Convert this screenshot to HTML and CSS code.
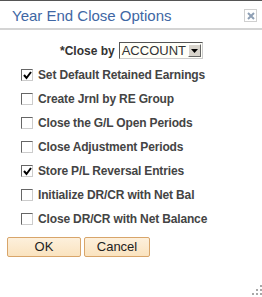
FILE: index.html
```html
<!DOCTYPE html>
<html>
<head>
<title>Year End Close Options</title>
<meta charset="utf-8">
<link rel="stylesheet" href="styles.css">
</head>
<body>
<div class="dialog">
	<div class="header">
		<div class="title">Year End Close Options</div>
		<div class="close">
			<svg width="8" height="8" viewBox="0 0 8 8"><path d="M1 1L7 7M7 1L1 7" stroke="#8fa0b5" stroke-width="2"/></svg>
		</div>
	</div>
	<div class="body">
		<div class="closeby">
			<span class="lbl">*Close by</span>
			<span class="select"><span class="value">ACCOUNT</span><span class="arrow"><svg width="7" height="4" viewBox="0 0 7 4"><path d="M0 0H7L3.5 4Z" fill="#000"/></svg></span></span>
		</div>
		<div class="opt"><span class="box"><svg width="9" height="9" viewBox="0 0 9 9"><path d="M1 4L3.5 7L8 1" stroke="#000" stroke-width="2" fill="none"/></svg></span>Set Default Retained Earnings</div>
		<div class="opt"><span class="box"></span>Create Jrnl by RE Group</div>
		<div class="opt"><span class="box"></span>Close the G/L Open Periods</div>
		<div class="opt"><span class="box"></span>Close Adjustment Periods</div>
		<div class="opt"><span class="box"><svg width="9" height="9" viewBox="0 0 9 9"><path d="M1 4L3.5 7L8 1" stroke="#000" stroke-width="2" fill="none"/></svg></span>Store P/L Reversal Entries</div>
		<div class="opt"><span class="box"></span>Initialize DR/CR with Net Bal</div>
		<div class="opt"><span class="box"></span>Close DR/CR with Net Balance</div>
		<div class="buttons">
			<span class="btn ok">OK</span>
			<span class="btn cancel">Cancel</span>
		</div>
	</div>
	<div class="grip">
		<svg width="10" height="10" viewBox="0 0 10 10" fill="#a8a8a8">
			<rect x="8" y="0" width="2" height="2"/>
			<rect x="4" y="4" width="2" height="2"/><rect x="8" y="4" width="2" height="2"/>
			<rect x="0" y="8" width="2" height="2"/><rect x="4" y="8" width="2" height="2"/><rect x="8" y="8" width="2" height="2"/>
		</svg>
	</div>
</div>
</body>
</html>
```
FILE: styles.css
```css
html, body {
	margin: 0;
	padding: 0;
	background: #fff;
}
.dialog {
	position: relative;
	width: 262px;
	height: 297px;
	border-top: 1px solid #555;
	box-sizing: border-box;
	font-family: "Liberation Sans", Arial, sans-serif;
}
.header {
	display: flex;
	align-items: center;
	justify-content: space-between;
	height: 27px;
	border-bottom: 2px solid #d4d4d4;
	padding: 0 5px 0 12px;
}
.title {
	font-size: 15px;
	color: #4067a4;
	padding-top: 2px;
}
.close {
	display: flex;
	align-items: center;
	justify-content: center;
	width: 11px;
	height: 11px;
	border: 1px solid #d0d0d0;
	margin-top: 2px;
}
.body {
	padding: 11px 0 0 7px;
}
.closeby {
	display: flex;
	align-items: center;
	padding-left: 53px;
	height: 19px;
	margin-bottom: 3px;
}
.lbl {
	font-size: 12px;
	font-weight: bold;
	color: #333;
	margin-right: 4px;
}
.select {
	display: flex;
	align-items: center;
	width: 82px;
	height: 15px;
	border: 1px solid #555;
	border-right-color: #ccc;
	border-bottom-color: #ccc;
	background: #fffff8;
}
.value {
	flex: 1;
	font-size: 13px;
	color: #333;
	padding-left: 2px;
	line-height: 15px;
}
.arrow {
	display: flex;
	align-items: center;
	justify-content: center;
	width: 11px;
	height: 11px;
	margin-right: 1px;
	background: #d8d4cc;
	border: 1px solid;
	border-color: #fff #666 #666 #fff;
}
.opt {
	display: flex;
	align-items: center;
	height: 24px;
	padding-left: 14px;
	font-size: 12px;
	font-weight: bold;
	letter-spacing: -0.15px;
	color: #444;
}
.box {
	display: flex;
	align-items: center;
	justify-content: center;
	width: 10px;
	height: 10px;
	border: 1px solid;
	border-color: #666 #ccc #ccc #666;
	background: #fff;
	margin-right: 5px;
}
.buttons {
	display: flex;
	gap: 3px;
	margin-top: 6px;
}
.btn {
	height: 18px;
	line-height: 18px;
	border: 1px solid #d8a56a;
	border-radius: 2px;
	background: linear-gradient(#fdf0dc, #fae3bf);
	font-size: 13px;
	color: #222;
	text-align: center;
}
.ok {
	width: 72px;
}
.cancel {
	width: 64px;
}
.grip {
	position: absolute;
	right: 0;
	bottom: 2px;
	line-height: 0;
}
```
